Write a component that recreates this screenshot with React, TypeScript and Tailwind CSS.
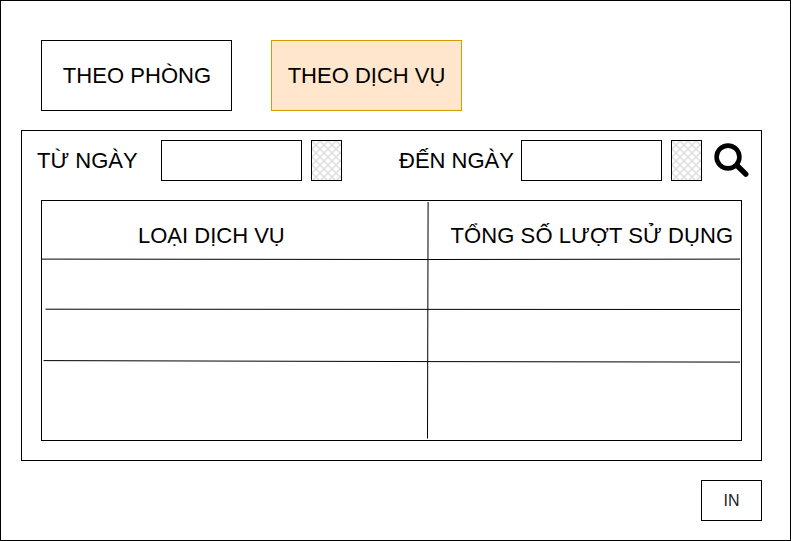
import React from "react";

function Hatch({ id }: { id: string }) {
  return (
    <div className="h-[41px] w-[31px] shrink-0 border border-black">
      <svg className="block h-full w-full" aria-hidden="true">
        <defs>
          <pattern id={id} width="8" height="8" patternUnits="userSpaceOnUse">
            <path d="M-1 -1L9 9M9 -1L-1 9" stroke="#dedede" strokeWidth="1.4" />
          </pattern>
        </defs>
        <rect width="100%" height="100%" fill={`url(#${id})`} />
      </svg>
    </div>
  );
}

function DateField({ label, className, id }: { label: string; className: string; id: string }) {
  return (
    <div className="flex items-center">
      <label htmlFor={id} className={className}>{label}</label>
      <input id={id} className="mr-[9px] h-[41px] w-[141px] shrink-0 border border-black outline-none" />
      <Hatch id={`${id}-hatch`} />
    </div>
  );
}

export default function App() {
  return (
    <main className="flex h-[541px] w-[791px] flex-col border border-black bg-white pl-5 pt-[39px] font-['Liberation_Sans',Arial,sans-serif] text-[22px] leading-[26px] whitespace-nowrap text-black">
      <div className="ml-5 flex gap-[39px]">
        <button className="h-[71px] w-[191px] border border-black pl-px tracking-[0.04px]">THEO PHÒNG</button>
        <button className="h-[71px] w-[191px] border border-[#d79b00] bg-[#ffe6cc]">THEO DỊCH VỤ</button>
      </div>

      <section className="mt-[19px] h-[331px] w-[741px] shrink-0 border border-black pt-[9px]">
        <div className="flex items-center">
          <DateField id="from" label="TỪ NGÀY" className="w-[139px] pl-[15px]" />
          <DateField id="to" label="ĐẾN NGÀY" className="w-[179px] pl-[57px]" />
          <svg className="ml-[11px] h-[39px] w-[39px]" viewBox="0 0 39 39" fill="none" stroke="#000" aria-label="Search">
            <circle cx="15" cy="16" r="11.4" strokeWidth="4.6" />
            <path d="M24.5 25L32.8 33.2" strokeWidth="5.4" strokeLinecap="round" />
          </svg>
        </div>

        <div className="relative mt-[19px] ml-[19px] h-[241px] w-[701px] border border-black">
          <div className="grid h-[58px] grid-cols-[386px_313px] items-center pt-3">
            <span className="pl-[96px]">LOẠI DỊCH VỤ</span>
            <span className="pl-[22.5px] tracking-[0.09px]">TỔNG SỐ LƯỢT SỬ DỤNG</span>
          </div>
          <svg className="pointer-events-none absolute inset-0 h-[239px] w-[699px]" viewBox="42 201 699 239" fill="none" stroke="#000">
            <path d="M42 259.1L427 259.5L740 259.1" />
            <path d="M45.5 309.2L740 309.5" />
            <path d="M43.5 360.6L427 361.6L740 362.1" />
            <path d="M428.1 202L427.5 438.5" />
          </svg>
        </div>
      </section>

      <button className="mt-[19px] ml-[680px] h-[41px] w-[61px] shrink-0 border border-black text-[16px] text-[#222]">IN</button>
    </main>
  );
}
